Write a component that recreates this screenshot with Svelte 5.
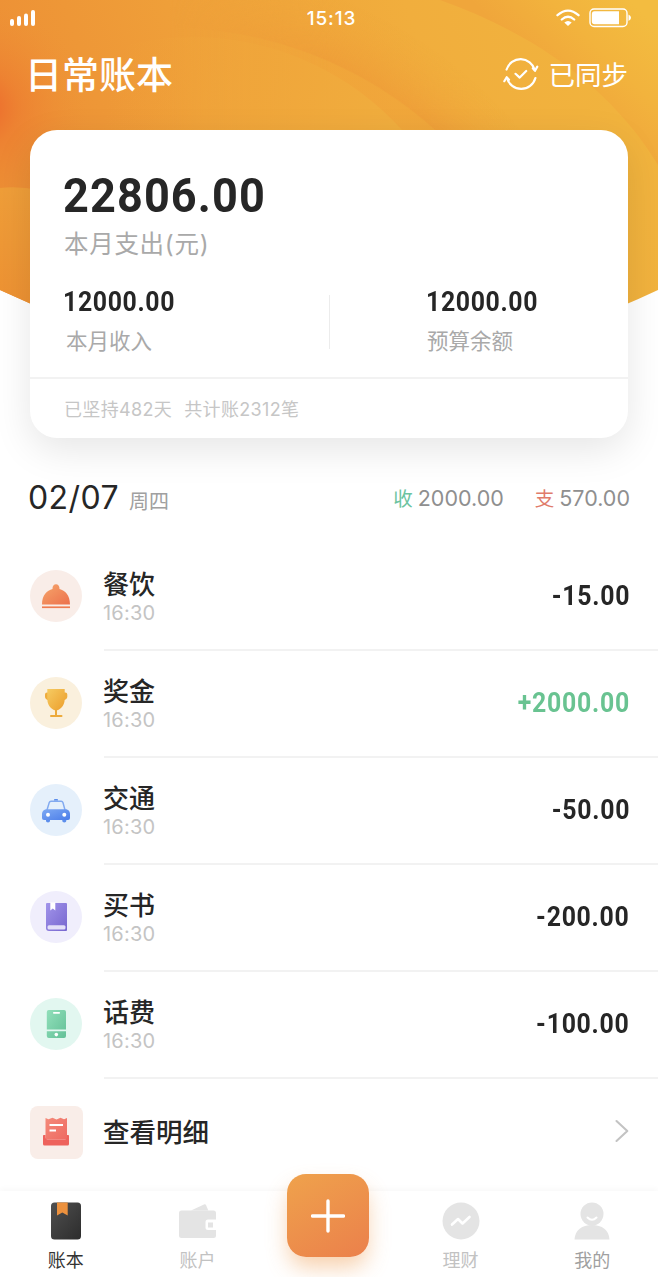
<script>
  const records = [
    { icon: "meal", name: "餐饮", time: "16:30", amount: "-15.00" },
    { icon: "cup", name: "奖金", time: "16:30", amount: "+2000.00" },
    { icon: "taxi", name: "交通", time: "16:30", amount: "-50.00" },
    { icon: "book", name: "买书", time: "16:30", amount: "-200.00" },
    { icon: "phone", name: "话费", time: "16:30", amount: "-100.00" },
  ];
</script>

<div class="page">
  <svg class="backdrop" width="658" height="380" viewBox="0 0 658 380">
    <defs>
      <linearGradient id="base" x1="0" y1="0.3" x2="1" y2="0.1">
        <stop offset="0" stop-color="#ed8f35" />
        <stop offset="0.3" stop-color="#ef9f39" />
        <stop offset="0.65" stop-color="#f1ae3d" />
        <stop offset="1" stop-color="#f1b53e" />
      </linearGradient>
      <radialGradient id="glow" gradientUnits="userSpaceOnUse" cx="-18" cy="108" r="105">
        <stop offset="0" stop-color="#ed642c" />
        <stop offset="0.35" stop-color="#ed742e" stop-opacity="0.5" />
        <stop offset="1" stop-color="#ee8f35" stop-opacity="0" />
      </radialGradient>
      <radialGradient id="band" gradientUnits="userSpaceOnUse" cx="169" cy="426" r="460">
        <stop offset="0" stop-color="#efa43a" stop-opacity="0.7" />
        <stop offset="0.864" stop-color="#efa43a" stop-opacity="0.7" />
        <stop offset="0.867" stop-color="#ee9c38" stop-opacity="0.75" />
        <stop offset="1" stop-color="#f0a83b" stop-opacity="0" />
      </radialGradient>
      <linearGradient id="fold" gradientUnits="userSpaceOnUse" x1="120" y1="60" x2="400" y2="140">
        <stop offset="0" stop-color="#f0a33a" stop-opacity="0" />
        <stop offset="0.5" stop-color="#f0a73b" stop-opacity="0.8" />
        <stop offset="1" stop-color="#f0ae3e" />
      </linearGradient>
      <linearGradient id="bandOuter" gradientUnits="userSpaceOnUse" x1="560" y1="90" x2="640" y2="10">
        <stop offset="0" stop-color="#f0a63b" />
        <stop offset="0.5" stop-color="#f2b33d" />
        <stop offset="1" stop-color="#f3bc40" />
      </linearGradient>
      <linearGradient id="disc" gradientUnits="userSpaceOnUse" x1="0" y1="188" x2="0" y2="300">
        <stop offset="0" stop-color="#ef9e39" />
        <stop offset="1" stop-color="#ed9233" />
      </linearGradient>
      <linearGradient id="leftFade" gradientUnits="userSpaceOnUse" x1="170" y1="0" x2="330" y2="0">
        <stop offset="0" stop-color="#000" />
        <stop offset="1" stop-color="#fff" />
      </linearGradient>
      <mask id="fromLeft"><rect width="658" height="380" fill="url(#leftFade)" /></mask>
      <clipPath id="arc"><path d="M0 0H658V290Q329 445 0 290Z" /></clipPath>
    </defs>
    <g clip-path="url(#arc)">
      <rect width="658" height="380" fill="url(#base)" />
      <circle cx="169" cy="426" r="460" fill="url(#band)" mask="url(#fromLeft)" />
      <circle cx="193" cy="318" r="281" fill="url(#fold)" />
      <path d="M440 0C530 32 610 85 658 165V0Z" fill="url(#bandOuter)" />
      <rect width="658" height="380" fill="url(#glow)" />
      <path d="M0 188Q18 186 40 190V330H0Z" fill="url(#disc)" />
    </g>
  </svg>

  <div class="status">
    <svg width="26" height="17" viewBox="0 0 26 17" fill="#fff">
      <rect x="0" y="9" width="4" height="7" rx="2" />
      <rect x="7" y="6" width="4" height="10" rx="2" />
      <rect x="14" y="3.500" width="4" height="12.500" rx="2" />
      <rect x="21" y="0" width="4" height="16" rx="2" />
    </svg>
    <span class="clock">15:13</span>
    <div class="status-right">
      <svg width="24" height="18" viewBox="0 0 24 18">
        <path d="M1.500 6.200Q12-3 22.500 6.200M5.800 10.500Q12 4.900 18.200 10.500" fill="none" stroke="#fff" stroke-width="2.300" stroke-linecap="round" />
        <path d="M8.300 13.600Q12 10.600 15.700 13.600L12 17Z" fill="#fff" />
      </svg>
      <svg width="42" height="20" viewBox="0 0 42 20">
        <rect x="1" y="1" width="37" height="17.500" rx="4" fill="none" stroke="#fff" stroke-width="1.400" />
        <path d="M5.500 3.200H30V16.300H5.500Q2.800 16.300 2.800 13V6.500Q2.800 3.200 5.500 3.200Z" fill="#fff" />
        <path d="M39.500 6.500Q42 8 42 9.800T39.500 13Z" fill="#fff" />
      </svg>
    </div>
  </div>

  <header>
    <h1>日常账本</h1>
    <div class="sync">
      <svg width="36" height="34" viewBox="0 0 36 34" fill="none" stroke="#fff" stroke-width="2.200" stroke-linecap="round" stroke-linejoin="round">
        <path d="M3.600 12.500A14.700 14.700 0 0 1 31.800 13M32.400 21A14.700 14.700 0 0 1 4 21" />
        <path d="M29.800 11.300L32 13.800L34.300 9.600M1.300 24.200L3.700 20.200L6 22.700M12.500 16.800L16.700 20.600L23.200 14" />
      </svg>
      <span>已同步</span>
    </div>
  </header>

  <section class="card">
    <div class="total"><span class="num">22806.00</span></div>
    <p class="total-label">本月支出(元)</p>
    <div class="split">
      <div class="cell">
        <div class="value"><span class="num">12000.00</span></div>
        <p>本月收入</p>
      </div>
      <div class="cell right">
        <div class="value"><span class="num">12000.00</span></div>
        <p>预算余额</p>
      </div>
    </div>
    <footer><span>已坚持482天</span><span>共计账2312笔</span></footer>
  </section>

  <div class="day">
    <span class="date">02/07</span>
    <span class="week">周四</span>
    <span class="sum"><i class="in">收</i>2000.00</span>
    <span class="sum"><i class="out">支</i>570.00</span>
  </div>

  <ul>
    {#each records as record}
      <li>
        <div class="badge {record.icon}">
          <svg width="52" height="52" viewBox="0 0 52 52">
            {#if record.icon === "meal"}
              <defs>
                <linearGradient id="g-meal" x1="0" y1="0" x2="1" y2="1">
                  <stop offset="0" stop-color="#f6a66b" /><stop offset="1" stop-color="#ec704c" />
                </linearGradient>
              </defs>
              <path d="M12 34.500C12 25 17 20.300 22.500 19C22.300 16 24 14.300 26 14.300S29.700 16 29.500 19C35 20.300 40 25 40 34.500Z" fill="url(#g-meal)" />
              <rect x="12" y="36.400" width="28" height="1.700" fill="#ee7c52" />
            {:else if record.icon === "cup"}
              <defs>
                <linearGradient id="g-cup" x1="0" y1="0" x2="1" y2="1">
                  <stop offset="0" stop-color="#f6cb62" /><stop offset="1" stop-color="#ec9f2d" />
                </linearGradient>
              </defs>
              <path d="M18 15.500H17Q15 15.500 15 17.500V20Q15.300 23 19.500 23.300V15.500ZM34 15.500H35.300Q37.300 15.500 37.300 17.500V20Q37 23 32.500 23.300V15.500Z" fill="#eeac3d" />
              <path d="M17.300 12H34.700V22C34.700 29.500 29 33.500 26 33.500S17.300 29.500 17.300 22Z" fill="url(#g-cup)" />
              <path d="M26 33V38.700M21 39H31.500" stroke="#edaa3b" stroke-width="2" stroke-linecap="round" />
            {:else if record.icon === "taxi"}
              <defs>
                <linearGradient id="g-taxi" x1="0" y1="0" x2="1" y2="1">
                  <stop offset="0" stop-color="#7da9f3" /><stop offset="1" stop-color="#4b7de9" />
                </linearGradient>
              </defs>
              <path d="M17 26L19.300 18.400Q19.700 17.200 21 17.200H31.200Q32.500 17.200 32.900 18.400L35 26" fill="none" stroke="#82aaf0" stroke-width="1.500" />
              <path d="M24 16.500V15.800Q24 15 24.800 15H27.200Q28 15 28 15.800V16.500ZM16 34H20V37Q20 38.400 18 38.400T16 37ZM32.300 34H36.300V37Q36.300 38.400 34.300 38.400T32.300 37Z" fill="#5c8eec" />
              <path d="M15.800 25.200H36.500Q40 26.500 40 30V34Q40 36 38 36H14Q12 36 12 34V30Q12 26.500 15.800 25.200Z" fill="url(#g-taxi)" />
              <circle cx="18" cy="30.800" r="2" fill="#fff" />
              <circle cx="34.300" cy="30.800" r="2" fill="#fff" />
            {:else if record.icon === "book"}
              <defs>
                <linearGradient id="g-book" x1="0" y1="0" x2="1" y2="1">
                  <stop offset="0" stop-color="#a194ea" /><stop offset="1" stop-color="#7766cf" />
                </linearGradient>
              </defs>
              <path d="M16 13Q16 12 17 12H36Q37 12 37 13V39Q37 40 36 40H19Q16 40 16 37Z" fill="url(#g-book)" />
              <path d="M20.300 11.500H25.300V19.500L22.800 17.500L20.300 19.500Z" fill="#fff" />
              <rect x="17.500" y="34.200" width="18" height="4.200" rx="1.500" fill="#e3dff8" />
            {:else}
              <defs>
                <linearGradient id="g-phone" x1="0" y1="0" x2="1" y2="1">
                  <stop offset="0" stop-color="#91dfba" /><stop offset="1" stop-color="#63c097" />
                </linearGradient>
              </defs>
              <path d="M16.800 31.600V14Q16.800 12 18.800 12H34Q36 12 36 14V31.600ZM16.800 33.200H36V38Q36 40 34 40H18.800Q16.800 40 16.800 38Z" fill="url(#g-phone)" />
              <rect x="23" y="14" width="7" height="1.700" rx="0.800" fill="#fff" />
              <circle cx="26.300" cy="36.600" r="1.800" fill="#fff" />
            {/if}
          </svg>
        </div>
        <div class="info">
          <div class="what">
            <strong>{record.name}</strong>
            <time>{record.time}</time>
          </div>
          <div class="amount" class:plus={record.amount.startsWith("+")}>
            <span class="num">{record.amount}</span>
          </div>
        </div>
      </li>
    {/each}
  </ul>

  <div class="more">
    <svg class="receipt" width="53" height="53" viewBox="0 0 53 53">
      <defs>
        <linearGradient id="g-more" x1="0" y1="0" x2="1" y2="1">
          <stop offset="0" stop-color="#f48a7a" /><stop offset="1" stop-color="#ee6a62" />
        </linearGradient>
      </defs>
      <path d="M15.500 12L18.500 13.200L22.500 11.800L26.500 13.500L30.500 11.800L34 13.200L37 12V33.500H15.500Z" fill="url(#g-more)" />
      <path d="M15.500 29H13.800Q13 29 13 29.800V38Q13 39.500 14.500 39.500H37.500Q39 39.500 39 38V29.800Q39 29 38.200 29H37V31.500Q37 33.500 35 33.500H17.500Q15.500 33.500 15.500 31.500Z" fill="#ee625c" />
      <path d="M19.500 19H33M19.500 24.500H26" stroke="#fff" stroke-width="2" />
    </svg>
    <span>查看明细</span>
    <svg class="chevron" width="14" height="24" viewBox="0 0 14 24">
      <path d="M1.500 2L12.300 12L1.500 22" fill="none" stroke="#c3c3c3" stroke-width="2.100" stroke-linecap="round" stroke-linejoin="round" />
    </svg>
  </div>

  <nav>
    <div class="tab active">
      <svg width="38" height="38" viewBox="0 0 38 38">
        <defs>
          <linearGradient id="g-ledger" x1="0" y1="0" x2="1" y2="1">
            <stop offset="0" stop-color="#505050" /><stop offset="1" stop-color="#2c2c2c" />
          </linearGradient>
        </defs>
        <rect x="4" y="0.500" width="30" height="37" rx="3.500" fill="url(#g-ledger)" />
        <path d="M10 0.500H20.700V13.500L15.300 10.500L10 13.500Z" fill="#ec913e" />
      </svg>
      <span>账本</span>
    </div>
    <div class="tab">
      <svg width="38" height="38" viewBox="0 0 38 38" fill="#e4e4e4">
        <path d="M13 8.500L26.500 2.300Q27.500 2 28 3L30.300 8.500Z" />
        <path d="M3.500 8.500H35.500Q38 8.500 38 11V17.500H30Q27.500 17.500 27.500 20V25.500Q27.500 28 30 28H38V33.500Q38 36 35.500 36H3.500Q1 36 1 33.500V11Q1 8.500 3.500 8.500Z" />
        <rect x="30" y="20.500" width="5" height="5" />
      </svg>
      <span>账户</span>
    </div>
    <div class="tab add">
      <svg width="34" height="34" viewBox="0 0 34 34">
        <path d="M17 2V32M1.500 17H32.500" stroke="#fff" stroke-width="3.400" stroke-linecap="round" />
      </svg>
    </div>
    <div class="tab">
      <svg width="38" height="38" viewBox="0 0 38 38">
        <circle cx="19" cy="19" r="18.500" fill="#e4e4e4" />
        <path d="M10 22.500L16 17L20.500 21.500L27.500 15" fill="none" stroke="#fff" stroke-width="2.600" stroke-linecap="round" stroke-linejoin="round" />
      </svg>
      <span>理财</span>
    </div>
    <div class="tab me">
      <svg width="38" height="38" viewBox="0 0 38 38">
        <circle cx="19" cy="12" r="11.500" fill="#e4e4e4" />
        <path d="M1.500 37.500C2 28 9 23 19 23S36 28 36.500 37.500Z" fill="#e4e4e4" />
        <path d="M14.500 15.500Q19 20 23.500 15.500" fill="none" stroke="#fff" stroke-width="2" stroke-linecap="round" />
      </svg>
      <span>我的</span>
    </div>
  </nav>
</div>

<style>
  :global(body) {
    margin: 0;
    background: #fff;
  }

  .page {
    position: relative;
    width: 658px;
    height: 1277px;
    overflow: hidden;
    background: #fff;
    color: #262626;
    font-family: Inter, "Noto Sans CJK SC", sans-serif;
  }

  svg {
    display: block;
    flex: none;
  }

  h1,
  p,
  ul {
    margin: 0;
    padding: 0;
    font-weight: 400;
  }

  .backdrop {
    position: absolute;
    top: 0;
    left: 0;
  }

  /* narrow, DIN-like figures */
  .num {
    display: inline-block;
    font-family: Roboto, sans-serif;
    font-weight: 700;
    transform: scaleX(0.92);
    transform-origin: left center;
    white-space: nowrap;
  }

  .status {
    position: relative;
    display: grid;
    grid-template-columns: 1fr auto 1fr;
    align-items: center;
    height: 36px;
    padding: 0 27px 0 10px;
    color: #fff;
  }

  .clock {
    padding-left: 22px;
    font-size: 19px;
    font-weight: 500;
    letter-spacing: 0.900px;
  }

  .status-right {
    display: flex;
    align-items: center;
    justify-content: flex-end;
    gap: 9px;
  }

  header {
    position: relative;
    display: flex;
    align-items: center;
    justify-content: space-between;
    height: 76px;
    padding: 0 30px 0 25px;
    color: #fff;
  }

  h1 {
    padding-top: 4px;
    font-size: 37px;
    font-weight: 500;
    line-height: 50px;
  }

  .sync {
    display: flex;
    align-items: center;
    gap: 10px;
    font-size: 26.500px;
    line-height: 32px;
  }

  .sync span {
    margin-top: 1px;
  }

  .card {
    position: relative;
    box-sizing: border-box;
    width: 598px;
    height: 308px;
    margin: 18px 30px 0;
    padding-top: 35px;
    border-radius: 27px;
    background: #fff;
    box-shadow: 0 12px 38px rgba(0, 0, 0, 0.1);
  }

  .total {
    height: 60px;
    padding-left: 33px;
    font-size: 49px;
    line-height: 60px;
    letter-spacing: 1.200px;
  }

  .total-label {
    height: 36px;
    padding: 1px 0 0 34px;
    font-size: 24.500px;
    line-height: 36px;
    letter-spacing: 0.700px;
    color: #a9a9a9;
  }

  .split {
    display: grid;
    grid-template-rows: 54px;
    grid-template-columns: 299px 1fr;
    margin-top: 33px;
  }

  .cell {
    box-sizing: border-box;
    padding-left: 33px;
  }

  .cell.right {
    padding-left: 96px;
    border-left: 1px solid #ececec;
  }

  .value {
    height: 30px;
    margin-top: -8px;
    font-size: 27px;
    line-height: 30px;
    letter-spacing: 0.700px;
  }

  .cell p {
    margin-top: 9px;
    padding-left: 3px;
    font-size: 21.500px;
    line-height: 30px;
    color: #a9a9a9;
  }

  .cell.right p {
    padding-left: 1px;
  }

  .card footer {
    display: flex;
    align-items: center;
    gap: 12px;
    height: 57px;
    margin-top: 28px;
    padding-left: 34px;
    border-top: 2px solid #f2f2f2;
    font-size: 18px;
    letter-spacing: 0.350px;
    color: #c6c6c6;
  }

  .day {
    position: relative;
    display: flex;
    align-items: baseline;
    height: 60px;
    margin-top: 40px;
    padding: 0 28px;
    line-height: 40px;
  }

  .date {
    font-size: 32px;
    letter-spacing: 0.400px;
  }

  .week {
    margin-left: 10px;
    margin-right: auto;
    font-size: 20px;
    color: #a0a0a0;
  }

  .sum {
    align-self: flex-start;
    margin-left: 31px;
    font-size: 21.500px;
    color: #8f8f8f;
  }

  .sum i {
    margin-right: 5px;
    font-size: 19.500px;
    font-style: normal;
  }

  .in {
    color: #6cc3a0;
  }

  .out {
    color: #e07b6b;
  }

  ul {
    position: relative;
    margin-top: 6px;
    list-style: none;
  }

  li {
    display: flex;
    height: 107px;
    padding-left: 30px;
  }

  .badge {
    width: 52px;
    height: 52px;
    margin: 26px 22px 0 0;
    border-radius: 50%;
  }

  .meal {
    background: #f9ede8;
  }

  .cup {
    background: #faf0dd;
  }

  .taxi {
    background: #e5f0fb;
  }

  .book {
    background: #f0eefc;
  }

  .phone {
    background: #e2f7f0;
  }

  .info {
    display: flex;
    flex: 1;
    justify-content: space-between;
    box-sizing: border-box;
    padding-right: 29px;
    border-bottom: 2px solid #f2f2f2;
  }

  .what {
    display: flex;
    flex-direction: column;
    margin-left: -1px;
    padding-top: 23px;
  }

  .what strong {
    font-size: 26px;
    font-weight: 500;
    line-height: 36px;
  }

  .what time {
    margin-top: -2px;
    font-size: 20px;
    line-height: 24px;
    letter-spacing: 0.200px;
    color: #c4c4c4;
  }

  .amount {
    padding-top: 32px;
    font-size: 27px;
    line-height: 40px;
    letter-spacing: 0.800px;
  }

  .amount .num {
    margin-right: -0.800px;
    transform-origin: right center;
  }

  .amount.plus {
    color: #69c391;
  }

  .more {
    display: flex;
    align-items: center;
    height: 107px;
    padding: 0 29px 0 30px;
  }

  .more span {
    flex: 1;
    margin: -2px 0 0 20px;
    font-size: 26.500px;
    font-weight: 500;
    line-height: 40px;
  }

  .chevron {
    margin-top: -3px;
  }

  .receipt {
    border-radius: 8px;
    background: #f9ede8;
  }

  nav {
    position: relative;
    display: flex;
    height: 86px;
    margin-top: 5px;
    background: #fff;
    box-shadow: 0 -2px 6px rgba(0, 0, 0, 0.03);
  }

  .tab {
    display: flex;
    flex: 1;
    flex-direction: column;
    align-items: center;
    padding-top: 11px;
    font-size: 18px;
    color: #c2c2c2;
  }

  .tab span {
    margin-top: 8px;
    line-height: 26px;
  }

  .active {
    color: #333;
  }

  .me {
    color: #a0a0a0;
  }

  .add {
    flex: none;
    justify-content: center;
    width: 82px;
    height: 83px;
    margin: -17px 25.800px 0 23.800px;
    padding: 0;
    border-radius: 19px;
    background: linear-gradient(150deg, #efa24c, #eb804b);
    box-shadow: 0 12px 22px -2px rgba(238, 150, 70, 0.45);
  }
</style>
